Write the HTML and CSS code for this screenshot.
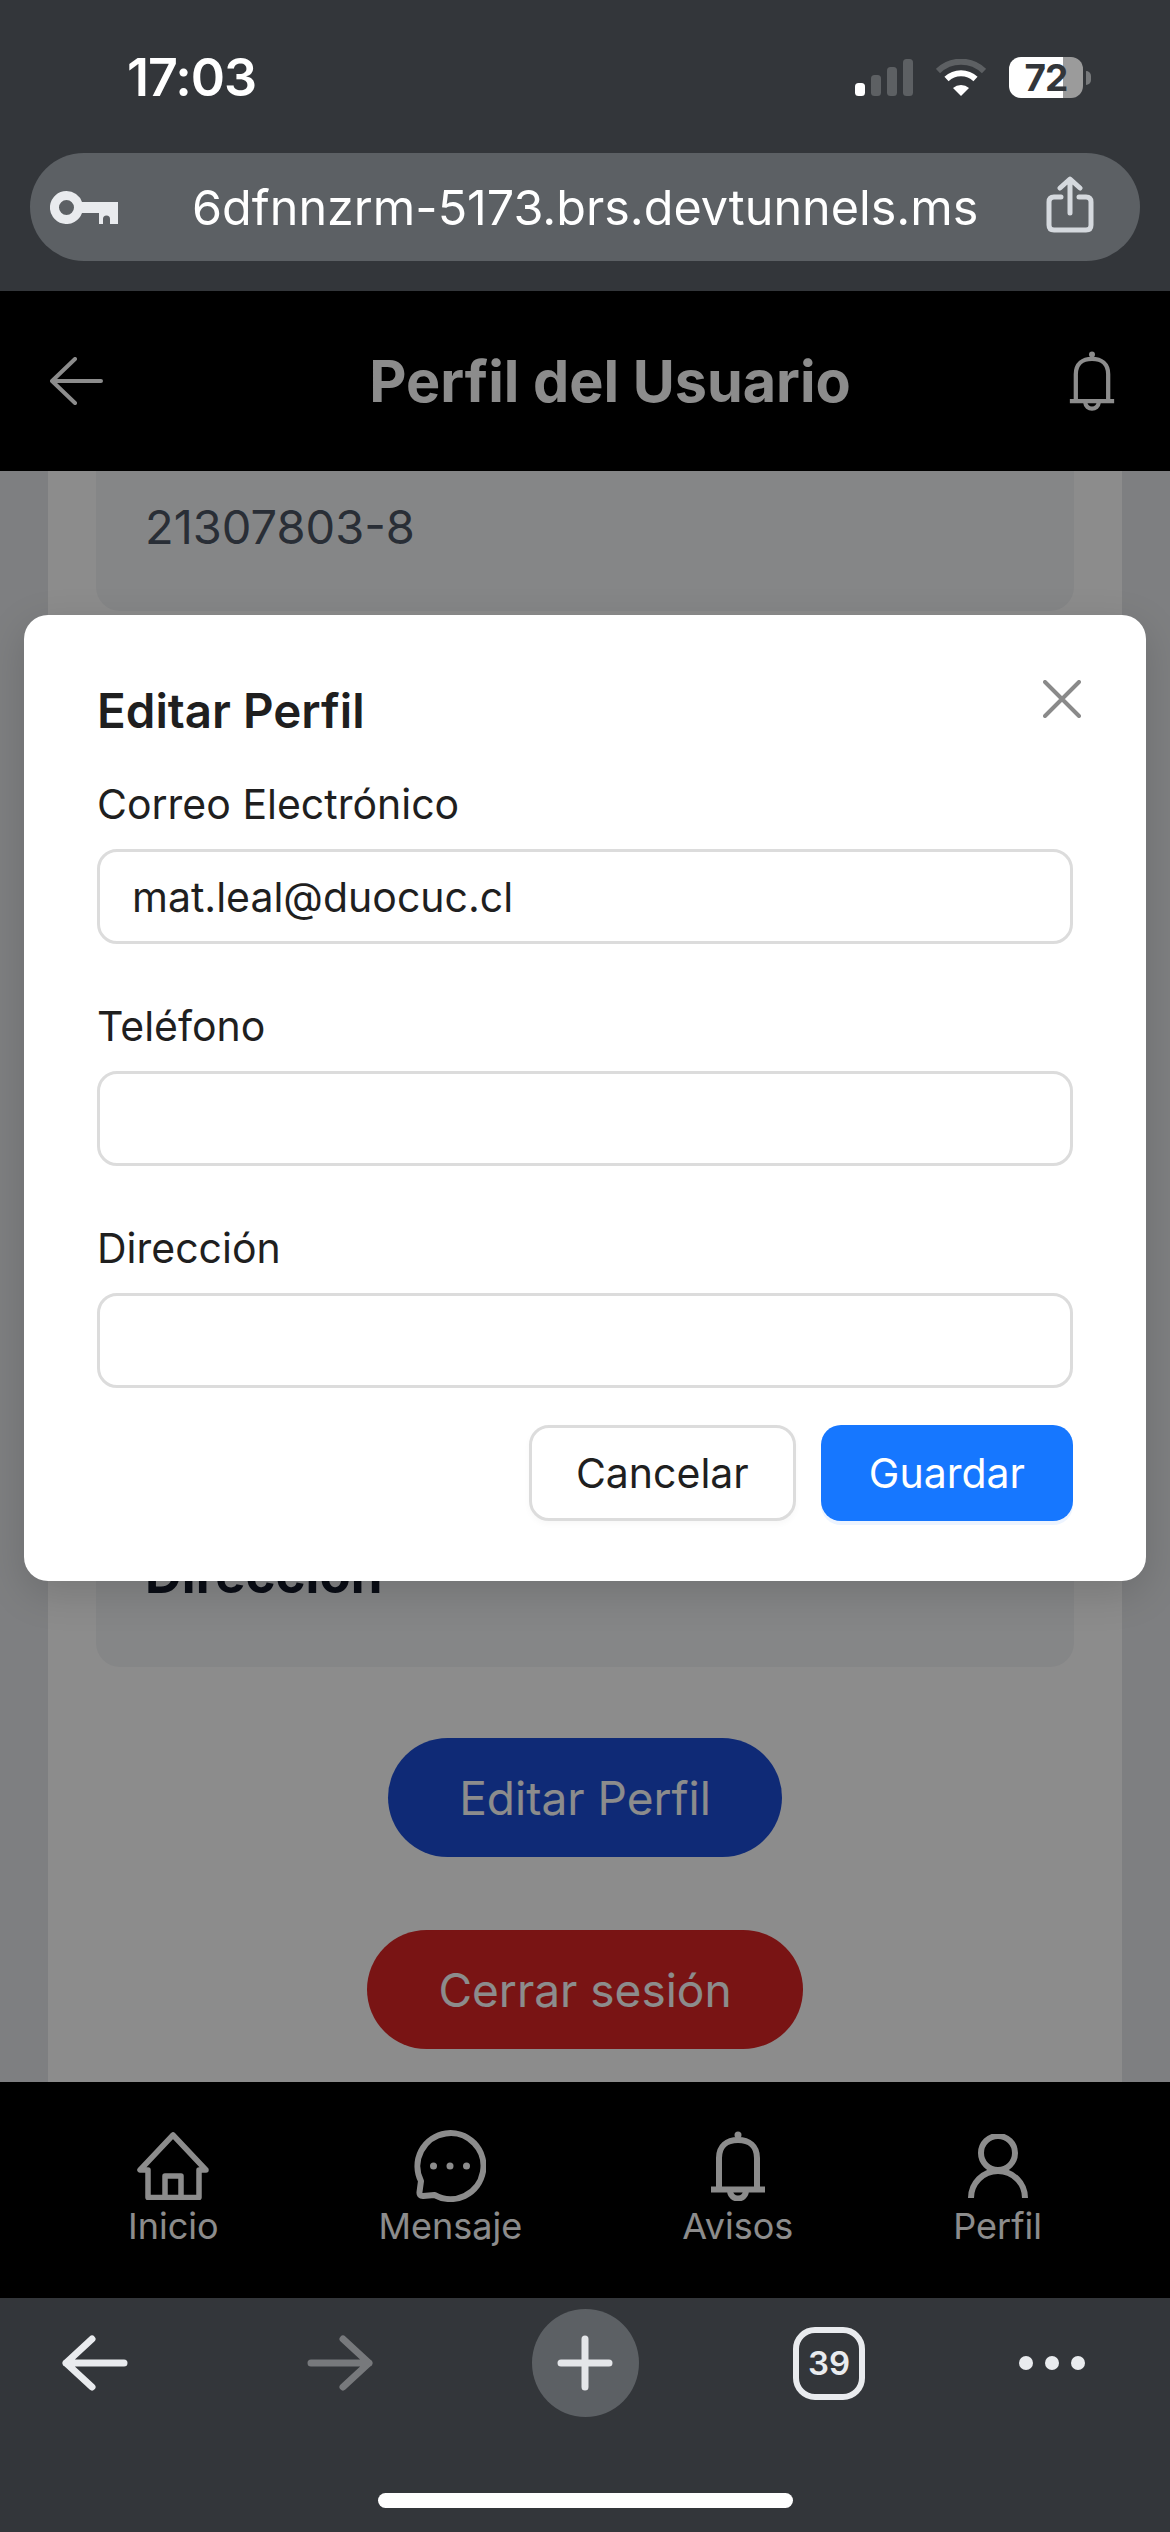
FILE: index.html
```html
<!DOCTYPE html>
<html lang="es">
<head>
  <meta charset="UTF-8" />
  <meta name="viewport" content="width=device-width, initial-scale=1.0"/>
  <title>Perfil del Usuario</title>
  <link rel="stylesheet" href="styles.css">
</head>
<body>
  <div class="screen">
    <!-- Barra superior del navegador -->
    <div class="browser-top">
      <div class="status-bar">
        <span class="time">17:03</span>
        <div class="status-icons">
          <svg width="58" height="37" viewBox="0 0 58 37">
            <rect x="0" y="24" width="10" height="13" rx="3.5" fill="#fff"/>
            <rect x="16" y="16" width="10" height="21" rx="3.5" fill="#5d6063"/>
            <rect x="32" y="8" width="10" height="29" rx="3.5" fill="#5d6063"/>
            <rect x="48" y="0" width="10" height="37" rx="3.5" fill="#5d6063"/>
          </svg>
          <svg class="wifi" width="50" height="37" viewBox="0 0 50 37">
            <path d="M2 12 A33 33 0 0 1 48 12" fill="none" stroke="#5d6063" stroke-width="6"/>
            <path d="M10.500 20 A21 21 0 0 1 39.500 20" fill="none" stroke="#fff" stroke-width="6"/>
            <path d="M17 29 L25 37 L33 29 A12 12 0 0 0 17 29 Z" fill="#fff"/>
          </svg>
          <div class="battery">
            <div class="battery-body"><span>72</span></div>
            <div class="battery-nub"></div>
          </div>
        </div>
      </div>
      <div class="url-bar">
        <svg class="key" width="68" height="33" viewBox="0 0 68 33">
          <path fill-rule="evenodd" fill="#e9ebee" d="M16.500 0 A16.500 16.500 0 0 1 32 11 H68 V33 H60 V28 A3.500 3.500 0 0 0 53 28 V33 H49 V22 H32 A16.500 16.500 0 1 1 16.500 0 Z M16.500 9 A7.500 7.500 0 1 0 16.500 24 A7.500 7.500 0 1 0 16.500 9 Z"/>
        </svg>
        <span class="url-text">6dfnnzrm-5173.brs.devtunnels.ms</span>
        <svg class="share" width="48" height="57" viewBox="0 0 48 57" fill="none" stroke="#d5d9de" stroke-width="5" stroke-linecap="round" stroke-linejoin="round">
          <path d="M15 21 H8 Q3 21 3 26 V49 Q3 54 8 54 H40 Q45 54 45 49 V26 Q45 21 40 21 H33"/>
          <path d="M24 37 V4 M14 12 L24 3 L34 12"/>
        </svg>
      </div>
    </div>

    <div class="webview">
      <header class="app-header">
        <svg width="53" height="48" viewBox="0 0 53 48" fill="none" stroke="#fff" stroke-width="4" stroke-linecap="round" stroke-linejoin="round">
          <path d="M51 24 H3 M25 2 L2 24 L25 46"/>
        </svg>
        <h1>Perfil del Usuario</h1>
        <svg width="46" height="60" viewBox="0 0 54 70" fill="none" stroke="#fff" stroke-width="5">
          <circle cx="27" cy="4" r="3.500" fill="#fff" stroke="none"/>
          <path d="M8 58 V27 C8 15 16 9 27 9 C38 9 46 15 46 27 V58 M1 58.500 H53 M19 60 C20 70 34 70 35 60"/>
        </svg>
      </header>

      <main class="page">
        <section class="profile-card">
          <div class="info-card info-first">
            <p class="info-value">21307803-8</p>
          </div>
          <div class="info-card info-last">
            <h3 class="info-label">Dirección</h3>
          </div>
          <div class="profile-actions">
            <button class="pill pill-blue" type="button">Editar Perfil</button>
            <button class="pill pill-red" type="button">Cerrar sesión</button>
          </div>
        </section>
      </main>

      <nav class="app-nav">
        <a class="nav-item">
          <div class="nav-icon">
            <svg width="72" height="68" viewBox="0 0 72 68" fill="none" stroke="#fff" stroke-width="5.500" stroke-linejoin="round">
              <path d="M36 3 L3 38 H11 V65.500 H62 V38 H69 Z"/>
              <path d="M28 65 V44 H44 V65"/>
            </svg>
          </div>
          <span>Inicio</span>
        </a>
        <a class="nav-item">
          <div class="nav-icon">
            <svg width="72" height="72" viewBox="0 0 72 72" fill="none" stroke="#fff" stroke-width="6" stroke-linejoin="round">
              <path d="M7 51 A33 33 0 1 1 20.500 65 L9 66 Q5 66 5.500 62 Z"/>
              <circle cx="19.500" cy="36" r="3.500" fill="#fff" stroke="none"/>
              <circle cx="36" cy="36" r="3.500" fill="#fff" stroke="none"/>
              <circle cx="52.500" cy="36" r="3.500" fill="#fff" stroke="none"/>
            </svg>
          </div>
          <span>Mensaje</span>
        </a>
        <a class="nav-item">
          <div class="nav-icon">
            <svg width="54" height="70" viewBox="0 0 54 70" fill="none" stroke="#fff" stroke-width="6">
              <circle cx="27" cy="4" r="3.500" fill="#fff" stroke="none"/>
              <path d="M8 58 V27 C8 15 16 9 27 9 C38 9 46 15 46 27 V58 M0 58.500 H54 M19 60 C20 70 34 70 35 60"/>
            </svg>
          </div>
          <span>Avisos</span>
        </a>
        <a class="nav-item">
          <div class="nav-icon">
            <svg width="60" height="64" viewBox="0 0 60 64" fill="none" stroke="#fff" stroke-width="6">
              <circle cx="30" cy="19" r="17"/>
              <path d="M3 64 A27 27 0 0 1 57 64"/>
            </svg>
          </div>
          <span>Perfil</span>
        </a>
      </nav>

      <div class="scrim"></div>

      <!-- Modal editar perfil -->
      <div class="modal">
        <button class="modal-close" type="button" aria-label="Cerrar">
          <svg width="38" height="38" viewBox="0 0 38 38" fill="none" stroke="#8a8a8a" stroke-width="4" stroke-linecap="round">
            <path d="M2 2 L36 36 M36 2 L2 36"/>
          </svg>
        </button>
        <h2>Editar Perfil</h2>
        <form>
          <div class="field">
            <label for="correo">Correo Electrónico</label>
            <input type="text" id="correo" value="mat.leal@duocuc.cl" />
          </div>
          <div class="field">
            <label for="telefono">Teléfono</label>
            <input type="text" id="telefono" />
          </div>
          <div class="field field-last">
            <label for="direccion">Dirección</label>
            <input type="text" id="direccion" />
          </div>
          <div class="modal-actions">
            <button class="btn btn-cancel" type="button">Cancelar</button>
            <button class="btn btn-save" type="submit">Guardar</button>
          </div>
        </form>
      </div>
    </div>

    <!-- Barra inferior del navegador -->
    <div class="browser-bottom">
      <div class="toolbar">
        <svg width="66" height="56" viewBox="0 0 66 56" fill="none" stroke="#e9ebee" stroke-width="7" stroke-linecap="round" stroke-linejoin="round">
          <path d="M4 28 H62 M30 4 L4 28 L30 52"/>
        </svg>
        <svg width="66" height="56" viewBox="0 0 66 56" fill="none" stroke="#77797c" stroke-width="7" stroke-linecap="round" stroke-linejoin="round">
          <path d="M4 28 H62 M36 4 L62 28 L36 52"/>
        </svg>
        <div class="new-tab">
          <svg width="56" height="56" viewBox="0 0 56 56" fill="none" stroke="#e4e6e9" stroke-width="7" stroke-linecap="round">
            <path d="M4 28 H52 M28 4 V52"/>
          </svg>
        </div>
        <div class="tabs-count">39</div>
        <div class="more-dots"><i></i><i></i><i></i></div>
      </div>
      <div class="home-indicator"></div>
    </div>
  </div>
</body>
</html>
```

FILE: styles.css
```css
* {
  box-sizing: border-box;
}

body {
  margin: 0;
  font-family: 'Inter', sans-serif;
  background-color: #33363a;
}

.screen {
  width: 1170px;
  height: 2532px;
  display: flex;
  flex-direction: column;
  overflow: hidden;
}

/* Barra superior */
.browser-top {
  height: 291px;
  padding: 0 30px;
  background-color: #33363a;
  color: #fff;
}

.status-bar {
  height: 153px;
  padding: 2px 49px 0 97px;
  display: flex;
  justify-content: space-between;
  align-items: center;
}

.time {
  font-size: 52px;
  font-weight: 600;
  letter-spacing: -1px;
}

.status-icons {
  display: flex;
  align-items: center;
  gap: 23px;
}

.battery {
  display: flex;
  align-items: center;
  gap: 3px;
}

.battery-body {
  width: 74px;
  height: 41px;
  border-radius: 12px;
  background: linear-gradient(90deg, #fff 73%, #9b9b9b 73%);
  color: #33363a;
  font-size: 37px;
  font-weight: 700;
  letter-spacing: -1px;
  line-height: 41px;
  text-align: center;
}

.battery-nub {
  width: 5px;
  height: 14px;
  border-radius: 0 7px 7px 0;
  background-color: #77797b;
}

.url-bar {
  height: 108px;
  padding: 0 46px 0 20px;
  display: flex;
  align-items: center;
  border-radius: 54px;
  background-color: #5c6064;
}

.key {
  flex-shrink: 0;
}

.url-text {
  margin-left: 74px;
  flex: 1;
  font-size: 48.500px;
  white-space: nowrap;
}

.share {
  flex-shrink: 0;
  margin-top: -6px;
}

/* Contenido de la app */
.webview {
  position: relative;
  flex: 1;
  display: flex;
  flex-direction: column;
  min-height: 0;
}

.app-header {
  height: 180px;
  padding: 0 55px 0 50px;
  display: flex;
  justify-content: space-between;
  align-items: center;
  background-color: #000;
  color: #fff;
}

.app-header h1 {
  margin: 0 0 0 48px;
  font-size: 57.500px;
  font-weight: 700;
}

.page {
  flex: 1;
  min-height: 0;
  overflow: hidden;
  padding: 0 48px;
  background-color: #e5e7eb;
}

.profile-card {
  padding: 0 48px;
  background-color: #fff;
  height: 100%;
}

.info-card {
  padding: 0 49px;
  border-radius: 0 0 24px 24px;
  background-color: #f3f4f6;
}

.info-first {
  height: 140px;
  padding-top: 27px;
}

.info-last {
  height: 170px;
  margin-top: 886px;
  padding-top: 48px;
  border-radius: 24px;
}

.info-value {
  margin: 0;
  font-size: 47px;
  line-height: 58px;
  color: #4b5563;
}

.info-label {
  margin: 0;
  font-size: 51px;
  line-height: 60px;
  font-weight: 700;
  color: #111827;
}

.profile-actions {
  margin-top: 71px;
  display: flex;
  flex-direction: column;
  align-items: center;
  gap: 73px;
}

.pill {
  height: 119px;
  padding: 0 71px;
  border: none;
  border-radius: 60px;
  font-family: inherit;
  font-size: 46px;
  color: #fff;
}

.pill-blue {
  background-color: #1d4ed8;
}

.pill-red {
  background-color: #dc2626;
}

.app-nav {
  height: 216px;
  padding: 48px 48px 0;
  display: flex;
  justify-content: space-around;
  align-items: flex-start;
  background-color: #000;
  color: #fff;
}

.nav-item {
  display: flex;
  flex-direction: column;
  align-items: center;
  gap: 2px;
  font-size: 36px;
  line-height: 44px;
}

.nav-icon {
  height: 72px;
  display: flex;
  align-items: center;
}

.scrim {
  position: absolute;
  inset: 0;
  background-color: rgba(0, 0, 0, 0.45);
}

/* Modal */
.modal {
  position: absolute;
  top: 324px;
  left: 24px;
  right: 24px;
  padding: 66px 73px 60px;
  border-radius: 24px;
  background-color: #fff;
  color: #1f1f1f;
  box-shadow: 0 12px 40px rgba(0, 0, 0, 0.15);
}

.modal h2 {
  margin: 0 0 39px;
  font-size: 47.500px;
  line-height: 60px;
  font-weight: 600;
}

.modal-close {
  position: absolute;
  top: 65px;
  right: 65px;
  padding: 0;
  border: none;
  background: none;
  line-height: 0;
}

.field {
  margin-bottom: 58px;
}

.field-last {
  margin-bottom: 37px;
}

.field label {
  display: block;
  margin-bottom: 21px;
  font-size: 41px;
  line-height: 48px;
}

.field input {
  display: block;
  width: 100%;
  height: 95px;
  padding: 0 32px;
  border: 3px solid #dcdcdc;
  border-radius: 20px;
  background-color: #fff;
  font-family: inherit;
  font-size: 41px;
  color: #1f1f1f;
}

.modal-actions {
  display: flex;
  justify-content: flex-end;
  gap: 25px;
}

.btn {
  height: 96px;
  border-radius: 20px;
  font-family: inherit;
  font-size: 41px;
}

.btn-cancel {
  padding: 0 44px;
  border: 3px solid #dcdcdc;
  background-color: #fff;
  color: #1f1f1f;
  box-shadow: 0 3px 6px rgba(0, 0, 0, 0.03);
}

.btn-save {
  padding: 0 48px;
  border: none;
  background-color: #1677ff;
  color: #fff;
  box-shadow: 0 4px 0 rgba(22, 119, 255, 0.08);
}

/* Barra inferior */
.browser-bottom {
  height: 234px;
  padding-top: 11px;
  background-color: #33363a;
}

.toolbar {
  display: grid;
  grid-template-columns: 190px 300px 190px 298px 148px;
  justify-items: center;
  align-items: center;
  height: 108px;
}

.new-tab {
  width: 107px;
  height: 108px;
  display: flex;
  justify-content: center;
  align-items: center;
  border-radius: 50%;
  background-color: #5c6064;
}

.tabs-count {
  width: 72px;
  height: 73px;
  border: 6px solid #e9ebee;
  border-radius: 22px;
  color: #e9ebee;
  font-size: 33px;
  font-weight: 600;
  line-height: 61px;
  text-align: center;
}

.more-dots {
  display: flex;
  gap: 12px;
}

.more-dots i {
  display: block;
  width: 14px;
  height: 14px;
  border-radius: 50%;
  background-color: #e9ebee;
}

.home-indicator {
  width: 415px;
  height: 15px;
  margin: 76px auto 0;
  border-radius: 8px;
  background-color: #fff;
}
```
